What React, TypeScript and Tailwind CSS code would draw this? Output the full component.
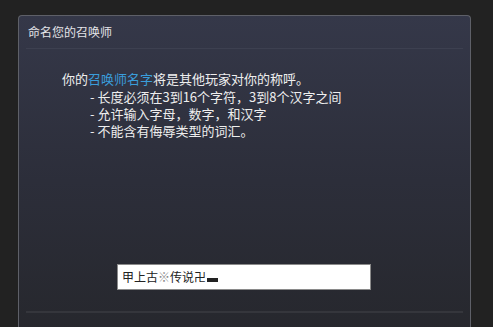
export default function App() {
  const font = { fontFamily: '"Noto Sans CJK SC", "Noto Sans", sans-serif' };
  return (
    <div className="h-[327px] w-[493px] overflow-hidden bg-[#222222] pt-[15px] pl-[18px]" style={font}>
      <div className="flex h-[330px] w-[453px] flex-col rounded-t-[4px] border border-b-0 border-[#5e6068] bg-gradient-to-b from-[#353849] via-[#2c2e3a] to-[#26272c]">
        {/* header */}
        <div className="mx-[7px] flex h-[33px] items-center border-b border-[#3d4050] pl-[2px] text-[12px] leading-none text-[#e4e4e8]">
          命名您的召唤师
        </div>

        {/* description */}
        <div className="pt-[21px] pl-[43px] text-[13px] leading-[17px] text-[#eeeeee]">
          <p className="mb-[1px]">
            你的<span className="text-[#3a9ddb]">召唤师名字</span>将是其他玩家对你的称呼。
          </p>
          <ul className="pl-[28px]">
            <li>- 长度必须在3到16个字符，3到8个汉字之间</li>
            <li>- 允许输入字母，数字，和汉字</li>
            <li>- 不能含有侮辱类型的词汇。</li>
          </ul>
        </div>

        {/* input */}
        <div className="mt-[125px] pl-[98px]">
          <div className="flex h-[26px] w-[254px] items-center border border-[#8a8a8a] bg-white pl-[4px] text-[12px] text-[#222222]">
            <span>甲上古<span className="text-[#888888]">※</span>传说卍</span>
            <span className="mt-[6px] ml-[1px] h-[4px] w-[11px] bg-[#222222]" />
          </div>
        </div>

        {/* footer divider */}
        <div className="mx-[7px] mt-[21px] h-[2px] bg-[#35363c]" />
      </div>
    </div>
  );
}
